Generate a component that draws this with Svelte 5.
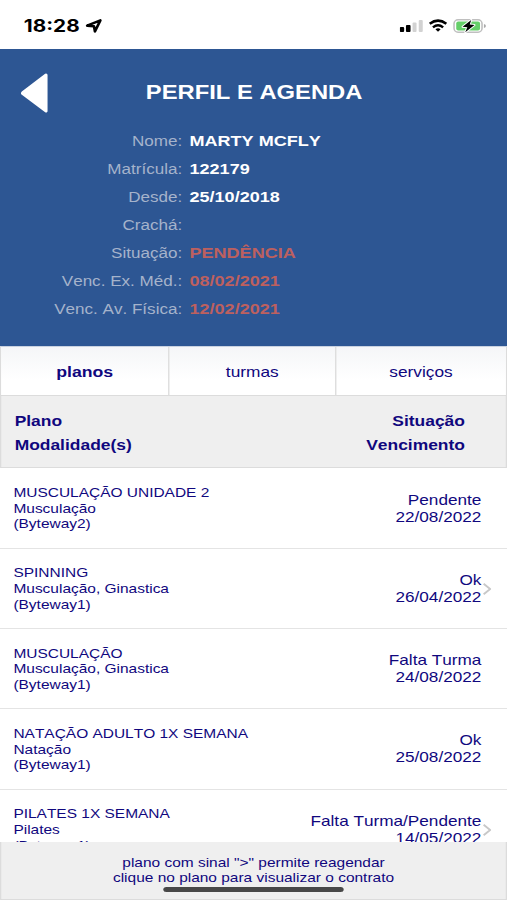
<script lang="ts">
	let activeTab = 'planos';

	const tabs = ['planos', 'turmas', 'serviços'];

	const profile = [
		{ label: 'Nome:', value: 'MARTY MCFLY', alert: false },
		{ label: 'Matrícula:', value: '122179', alert: false },
		{ label: 'Desde:', value: '25/10/2018', alert: false },
		{ label: 'Crachá:', value: '', alert: false },
		{ label: 'Situação:', value: 'PENDÊNCIA', alert: true },
		{ label: 'Venc. Ex. Méd.:', value: '08/02/2021', alert: true },
		{ label: 'Venc. Av. Física:', value: '12/02/2021', alert: true }
	];

	const plans = [
		{ name: 'MUSCULAÇÃO UNIDADE 2', classes: 'Musculação', unit: '(Byteway2)', status: 'Pendente', due: '22/08/2022', link: false },
		{ name: 'SPINNING', classes: 'Musculação, Ginastica', unit: '(Byteway1)', status: 'Ok', due: '26/04/2022', link: true },
		{ name: 'MUSCULAÇÃO', classes: 'Musculação, Ginastica', unit: '(Byteway1)', status: 'Falta Turma', due: '24/08/2022', link: false },
		{ name: 'NATAÇÃO ADULTO 1X SEMANA', classes: 'Natação', unit: '(Byteway1)', status: 'Ok', due: '25/08/2022', link: false },
		{ name: 'PILATES 1X SEMANA', classes: 'Pilates', unit: '(Byteway1)', status: 'Falta Turma/Pendente', due: '14/05/2022', link: true }
	];
</script>

<div class="screen">
	<div class="status-bar">
		<div class="clock">
			<span>18:28</span>
			<svg class="location" viewBox="0 0 17 14" preserveAspectRatio="none">
				<path d="M1.8 6.6 L15 1.4 L9.6 12.4 L8.6 7.2 Z" fill="none" stroke="#000" stroke-width="2.6" stroke-linejoin="round" />
			</svg>
		</div>
		<svg class="indicators" viewBox="0 0 88 16" preserveAspectRatio="none">
			<rect x="0" y="9" width="4.4" height="5" rx="1" fill="#000" />
			<rect x="6.2" y="7" width="4.6" height="7" rx="1" fill="#000" />
			<rect x="12.8" y="4.5" width="4" height="9.5" rx="1" fill="#d2d2d2" />
			<rect x="19" y="2" width="4" height="12" rx="1" fill="#d2d2d2" />
			<path d="M30 5.8 Q38.3 -0.6 46.6 5.8" fill="none" stroke="#000" stroke-width="2.5" />
			<path d="M33.2 9.3 Q38.3 5 43.4 9.3" fill="none" stroke="#000" stroke-width="2.4" />
			<path d="M35.7 11.2 Q38.3 9.2 40.9 11.2 L38.3 13.8 Z" fill="#000" />
			<rect x="54.3" y="1.8" width="28" height="12.4" rx="4" fill="#fff" stroke="#bfbfbf" stroke-width="1.6" />
			<rect x="56.5" y="3.5" width="23.8" height="9" rx="2" fill="#65cf69" />
			<path d="M84.2 6 Q86.2 6.4 86.2 8 Q86.2 9.6 84.2 10 Z" fill="#aaa" />
			<path d="M71.5 2 L62.8 8.8 L67.6 9.2 L65.5 14.2 L74.8 7 L70 6.6 Z" fill="#000" stroke="#fff" stroke-width="2" paint-order="stroke" stroke-linejoin="round" />
		</svg>
	</div>

	<header class="profile">
		<div class="title-row">
			<svg class="back" viewBox="0 0 28 40" preserveAspectRatio="none">
				<path d="M25.3 2 L2 19.8 Q1.6 20.2 2 20.6 L25.3 38 Z" fill="#fff" stroke="#fff" stroke-width="3" stroke-linejoin="round" />
			</svg>
			<h1>PERFIL E AGENDA</h1>
		</div>
		{#each profile as item}
			<div class="profile-row">
				<span class="label">{item.label}</span>
				<span class="value" class:alert={item.alert}>{item.value}</span>
			</div>
		{/each}
	</header>

	<nav class="tabs">
		{#each tabs as tab}
			<button class="tab" class:active={tab === activeTab} on:click={() => (activeTab = tab)}>{tab}</button>
		{/each}
	</nav>

	<div class="list-head">
		<div>Plano<br />Modalidade(s)</div>
		<div class="right">Situação<br />Vencimento</div>
	</div>

	<div class="list">
		{#each plans as plan}
			<div class="plan">
				<div class="plan-info">
					<div>{plan.name}</div>
					<div>{plan.classes}</div>
					<div>{plan.unit}</div>
				</div>
				<div class="plan-status">
					<div>{plan.status}</div>
					<div>{plan.due}</div>
				</div>
				<div class="arrow">
					{#if plan.link}
						<svg class="chevron" viewBox="0 0 9 12" preserveAspectRatio="none">
							<path d="M1 0.8 L7.5 6 L1 11.2" fill="none" stroke="#c8c8c8" stroke-width="1.9" />
						</svg>
					{/if}
				</div>
			</div>
		{/each}
	</div>

	<footer class="hint">
		<div>plano com sinal "&gt;" permite reagendar</div>
		<div>clique no plano para visualizar o contrato</div>
		<div class="home-bar"></div>
	</footer>
</div>

<style>
	:global(body) {
		background: #fff;
		overflow: hidden;
	}
	/* 416px layout widened to fill the 507px viewport */
	.screen {
		width: 416px;
		height: 900px;
		transform: scaleX(1.21875);
		transform-origin: 0 0;
		display: flex;
		flex-direction: column;
		overflow: hidden;
		background: #fff;
		color: #10077e;
		font-family: 'Liberation Sans', Arial, sans-serif;
		font-size: 14px;
		font-kerning: none;
	}
	.status-bar {
		flex: none;
		height: 49px;
		box-sizing: border-box;
		padding: 16px 15.6px 0 19.5px;
		display: flex;
		justify-content: space-between;
		align-items: flex-start;
	}
	.clock {
		display: flex;
		align-items: center;
		gap: 4.6px;
		color: #000;
		font-family: Inter, sans-serif;
		font-weight: 700;
		font-size: 17px;
		line-height: 20px;
	}
	.location {
		width: 14px;
		height: 14px;
	}
	.indicators {
		width: 72.2px;
		height: 16px;
		margin-top: 2px;
	}
	.profile {
		flex: none;
		height: 297px;
		background: #2d5693;
	}
	.title-row {
		display: flex;
		align-items: center;
		height: 86px;
		box-sizing: border-box;
		padding: 0 17px;
		margin-bottom: -8px;
	}
	.back {
		flex: none;
		width: 23px;
		height: 40px;
		margin-top: 2px;
	}
	h1 {
		flex: 1;
		margin: 0 22px 0 0;
		text-align: center;
		color: #fff;
		font-size: 19.5px;
		line-height: 24px;
		font-weight: 700;
	}
	.profile-row {
		display: flex;
		align-items: center;
		gap: 6px;
		height: 27.95px;
		line-height: 12px;
	}
	.label {
		width: 149.5px;
		text-align: right;
		color: #a5b3cb;
	}
	.value {
		color: #fff;
		font-size: 14.8px;
		font-weight: 700;
	}
	.value.alert {
		color: #bd605f;
	}
	.tabs {
		flex: none;
		display: flex;
		height: 50px;
		box-sizing: border-box;
		border: 1px solid #dcdcdc;
		border-top-color: #c9d2e0;
	}
	.tab {
		width: 137px;
		border: none;
		border-left: 1px solid #d8d8d8;
		padding: 2px 0 0;
		background: linear-gradient(#f5f6f8, #fff 70%);
		color: #10077e;
		font-family: inherit;
		font-size: 14.2px;
	}
	.tab:first-child {
		border-left: none;
	}
	.tab:last-child {
		flex: 1;
	}
	.tab.active {
		font-weight: 700;
		font-size: 14.5px;
	}
	.list-head {
		flex: none;
		display: flex;
		justify-content: space-between;
		height: 72.4px;
		box-sizing: border-box;
		padding: 14px 33.5px 0 11px;
		background: #efefef;
		border: 1px solid #dcdcdc;
		border-top: none;
		font-size: 14.3px;
		line-height: 23.7px;
		font-weight: 700;
	}
	.right {
		text-align: right;
	}
	.list {
		flex: 1;
		min-height: 0;
		overflow: hidden;
	}
	.plan {
		display: flex;
		align-items: center;
		height: 80.3px;
		box-sizing: border-box;
		padding: 1px 12px 0 11px;
		border-bottom: 1px solid #e4e4e4;
	}
	.plan-info {
		flex: 1;
		padding-top: 2px;
		font-size: 12.7px;
		line-height: 15.6px;
	}
	.plan-status {
		text-align: right;
		font-size: 14.1px;
		line-height: 17px;
	}
	.arrow {
		width: 9px;
		display: flex;
		justify-content: center;
	}
	.chevron {
		width: 7.4px;
		height: 12px;
	}
	.hint {
		flex: none;
		height: 58px;
		box-sizing: border-box;
		padding-top: 13.5px;
		background: #efefef;
		border: 1px solid #dcdcdc;
		border-top: none;
		text-align: center;
		font-size: 12.7px;
		line-height: 15.8px;
	}
	.home-bar {
		width: 148px;
		height: 5px;
		margin: 0 auto;
		border-radius: 3px;
		background: #484848;
	}
</style>
